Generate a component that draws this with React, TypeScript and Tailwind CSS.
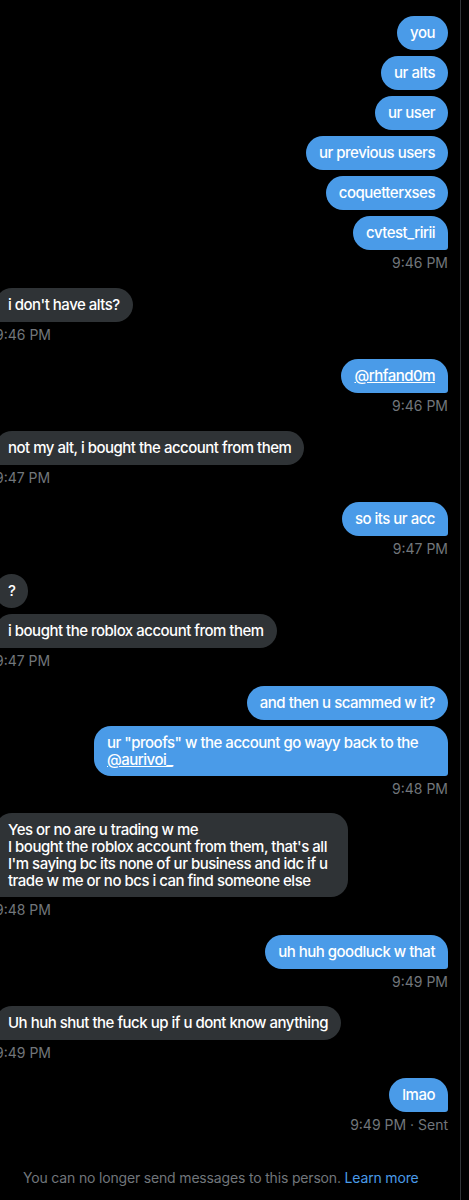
import React from "react";

type Msg = { text: React.ReactNode; w?: string };

function Bubble({ side, last, children, w }: { side: "l" | "r"; last: boolean; children: React.ReactNode; w?: string }) {
  const base =
    "rounded-[17px] px-[13px] py-[8px] min-h-[34px] text-[15px] leading-[17px] font-medium tracking-[-0.5px] text-white whitespace-nowrap";
  const cls =
    side === "r"
      ? `${base} self-end bg-[#4a9be8] ${last ? "rounded-br-[3px]" : ""}`
      : `${base} self-start bg-[#2f3336] ${last ? "rounded-bl-[3px]" : ""}`;
  return <div className={`${cls} ${w ?? ""}`}>{children}</div>;
}

function Group({ side, msgs, time }: { side: "l" | "r"; msgs: Msg[]; time: string }) {
  return (
    <div className={`flex flex-col gap-[6px] ${side === "r" ? "items-end" : "items-start"}`}>
      {msgs.map((m, i) => (
        <Bubble key={i} side={side} last={i === msgs.length - 1} w={m.w}>
          {m.text}
        </Bubble>
      ))}
      <div className="mt-[-2px] mb-[16.6px] text-[14px] leading-[17px] text-[#71767b]">{time}</div>
    </div>
  );
}

export default function App() {
  return (
    <div className="min-h-[1200px] w-[469px] bg-black flex font-[family-name:Inter,'Noto_Sans',sans-serif] overflow-hidden">
      <div className="flex-1 border-r border-[#2f3336] pr-[12px] pt-[16px]">
        <div className="ml-[-5px] flex flex-col">
          <Group
            side="r"
            time="9:46 PM"
            msgs={[
              { text: "you" },
              { text: "ur alts" },
              { text: "ur user" },
              { text: "ur previous users" },
              { text: "coquetterxses" },
              { text: "cvtest_ririi" },
            ]}
          />
          <Group side="l" time="9:46 PM" msgs={[{ text: "i don't have alts?" }]} />
          <Group side="r" time="9:46 PM" msgs={[{ text: <span className="underline">@rhfand0m</span> }]} />
          <Group side="l" time="9:47 PM" msgs={[{ text: "not my alt, i bought the account from them" }]} />
          <Group side="r" time="9:47 PM" msgs={[{ text: "so its ur acc" }]} />
          <Group
            side="l"
            time="9:47 PM"
            msgs={[{ text: "?" }, { text: "i bought the roblox account from them" }]}
          />
          <Group
            side="r"
            time="9:48 PM"
            msgs={[
              { text: "and then u scammed w it?" },
              {
                w: "w-[354px]",
                text: (
                  <>
                    ur "proofs" w the account go wayy back to the
                    <br />
                    <span className="underline">@aurivoi_</span>
                  </>
                ),
              },
            ]}
          />
          <Group
            side="l"
            time="9:48 PM"
            msgs={[
              {
                w: "w-[353px]",
                text: (
                  <>
                    Yes or no are u trading w me
                    <br />
                    I bought the roblox account from them, that's all
                    <br />
                    I'm saying bc its none of ur business and idc if u
                    <br />
                    trade w me or no bcs i can find someone else
                  </>
                ),
              },
            ]}
          />
          <Group side="r" time="9:49 PM" msgs={[{ text: "uh huh goodluck w that" }]} />
          <Group side="l" time="9:49 PM" msgs={[{ text: "Uh huh shut the fuck up if u dont know anything" }]} />
          <Group side="r" time="9:49 PM · Sent" msgs={[{ text: "lmao" }]} />
        </div>
        <div className="mt-[19px] pl-[23px] text-[14px] leading-[17px] tracking-[-0.17px] text-[#71767b]">
          You can no longer send messages to this person. <span className="text-[#4a9be8]">Learn more</span>
        </div>
      </div>
      <div className="w-[8px]" />
    </div>
  );
}
